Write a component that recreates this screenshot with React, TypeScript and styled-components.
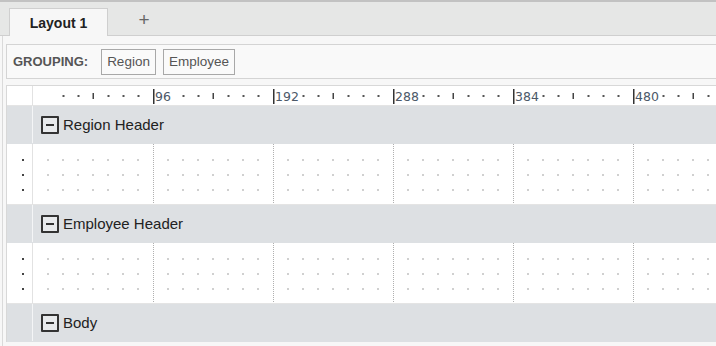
import React from 'react';
import styled, { createGlobalStyle } from 'styled-components';

const GlobalStyle = createGlobalStyle`
  html, body {
    margin: 0;
    padding: 0;
    background: #f7f7f7;
    font-family: "Liberation Sans", Arial, sans-serif;
    overflow: hidden;
  }
`;

const UNIT = 15;
const AREA_WIDTH = 700;

const Page = styled.div`
  width: 716px;
  height: 346px;
  display: flex;
  flex-direction: column;
  border-top: 2px solid #c2c2c2;
  box-sizing: border-box;
`;

const TabBar = styled.div`
  height: 33px;
  background: #e6e7e6;
  border-bottom: 1px solid #cfcfcf;
  display: flex;
  align-items: flex-end;
  padding-left: 9px;
  flex-shrink: 0;
`;

const Tab = styled.div<{ active?: boolean }>`
  width: 99px;
  height: 28px;
  margin-bottom: -1px;
  box-sizing: border-box;
  display: flex;
  align-items: center;
  justify-content: center;
  font-size: 14px;
  font-weight: bold;
  color: #222;
  background: ${({ active }) => (active ? '#f7f7f7' : 'transparent')};
  border: 1px solid ${({ active }) => (active ? '#cfcfcf' : 'transparent')};
  border-bottom: none;
`;

const AddTab = styled.div`
  width: 72px;
  height: 28px;
  display: flex;
  align-items: center;
  justify-content: center;
  font-size: 19px;
  font-weight: 300;
  color: #666;
  padding-bottom: 2px;
  box-sizing: border-box;
`;

const Content = styled.div`
  flex: 1;
  margin-left: 2px;
  border-left: 1px solid #dadada;
  padding: 8px 0 0 3px;
  display: flex;
  flex-direction: column;
  gap: 6px;
  overflow: hidden;
`;

const GroupingBar = styled.div`
  height: 35px;
  box-sizing: border-box;
  background: #f9f9f9;
  border: 1px solid #d4d4d4;
  border-right: none;
  display: flex;
  align-items: center;
  gap: 7px;
  padding-left: 6px;
`;

const GroupingLabel = styled.span`
  font-size: 13px;
  font-weight: bold;
  color: #555;
  margin-right: 6px;
`;

const GroupChip = styled.span`
  height: 26px;
  box-sizing: border-box;
  padding: 0 5px;
  display: flex;
  align-items: center;
  border: 1px solid #a8a8a8;
  background: #fafafa;
  font-size: 13.5px;
  color: #555;
`;

const Designer = styled.div`
  border: 1px solid #d8d8d8;
  border-right: none;
  border-bottom: none;
  background: #fff;
  display: flex;
  flex-direction: column;
`;

type RowKind = 'ruler' | 'header' | 'detail';

const rowHeight: Record<RowKind, number> = { ruler: 20, header: 38, detail: 61 };

const Row = styled.div<{ kind: RowKind }>`
  display: grid;
  grid-template-columns: 26px 1fr;
  box-sizing: border-box;
  height: ${({ kind }) => rowHeight[kind]}px;
  flex-shrink: 0;
  border-bottom: 1px solid ${({ kind }) => (kind === 'header' ? '#dde0e3' : '#e4e4e4')};
  background: ${({ kind }) => (kind === 'header' ? '#dde0e3' : '#fff')};
`;

const Gutter = styled.div<{ kind: RowKind }>`
  border-right: 1px solid ${({ kind }) => (kind === 'header' ? '#f4f5f6' : '#e2e2e2')};
  overflow: hidden;
`;

const Canvas = styled.div`
  overflow: hidden;
`;

const HeaderCell = styled.div`
  display: flex;
  align-items: center;
  gap: 4px;
  padding-left: 8px;
  font-size: 15px;
  color: #222;
`;

const Collapse = styled.span`
  width: 18px;
  height: 18px;
  box-sizing: border-box;
  border: 2px solid #333;
  border-radius: 1px;
  background: #e8eaec;
  display: flex;
  align-items: center;
  justify-content: center;

  &::after {
    content: '';
    width: 8px;
    height: 2px;
    background: #333;
  }
`;

const Ruler = () => {
  const marks = [];
  for (let k = 1; k * UNIT < AREA_WIDTH; k++) {
    const x = k * UNIT;
    if (k % 8 === 0) {
      marks.push(<rect key={k} x={x} y={3} width={1.5} height={15} fill="#333" />);
      marks.push(
        <text key={`t${k}`} x={x + 2} y={15} fontFamily="DejaVu Sans, sans-serif" fontSize={12.5} fill="#4b5868">
          {(k / 8) * 96}
        </text>
      );
    } else if (k % 8 === 1) {
      continue;
    } else if (k % 4 === 0) {
      marks.push(<rect key={k} x={x - 0.5} y={7} width={1.5} height={6} fill="#444" />);
    } else {
      marks.push(<rect key={k} x={x - 0.5} y={9} width={2} height={2} fill="#555" />);
    }
  }
  return (
    <svg width={AREA_WIDTH} height={19} style={{ display: 'block' }}>
      {marks}
    </svg>
  );
};

const DetailGrid = () => {
  const items = [];
  for (let k = 1; k * UNIT < AREA_WIDTH; k++) {
    const x = k * UNIT;
    if (k % 8 === 0) {
      items.push(
        <line key={k} x1={x + 0.5} y1={0} x2={x + 0.5} y2={60} stroke="#b0b0b0" strokeDasharray="1 1" />
      );
    } else {
      [15, 30, 45].forEach((y) =>
        items.push(<rect key={`${k}-${y}`} x={x - 1} y={y} width={2} height={2} fill="#d0d0d0" />)
      );
    }
  }
  return (
    <svg width={AREA_WIDTH} height={60} style={{ display: 'block' }}>
      {items}
    </svg>
  );
};

const GutterDots = () => (
  <svg width={26} height={60} style={{ display: 'block' }}>
    {[15, 30, 45].map((y) => (
      <rect key={y} x={15} y={y} width={2} height={2} fill="#444" />
    ))}
  </svg>
);

const Section = ({ title, withDetail }: { title: string; withDetail: boolean }) => (
  <>
    <Row kind="header">
      <Gutter kind="header" />
      <HeaderCell>
        <Collapse />
        {title}
      </HeaderCell>
    </Row>
    {withDetail && (
      <Row kind="detail">
        <Gutter kind="detail">
          <GutterDots />
        </Gutter>
        <Canvas>
          <DetailGrid />
        </Canvas>
      </Row>
    )}
  </>
);

export default function App() {
  return (
    <>
      <GlobalStyle />
      <Page>
        <TabBar>
          <Tab active>Layout 1</Tab>
          <AddTab>+</AddTab>
        </TabBar>
        <Content>
          <GroupingBar>
            <GroupingLabel>GROUPING:</GroupingLabel>
            <GroupChip>Region</GroupChip>
            <GroupChip>Employee</GroupChip>
          </GroupingBar>
          <Designer>
            <Row kind="ruler">
              <Gutter kind="ruler" />
              <Canvas>
                <Ruler />
              </Canvas>
            </Row>
            <Section title="Region Header" withDetail />
            <Section title="Employee Header" withDetail />
            <Section title="Body" withDetail={false} />
          </Designer>
        </Content>
      </Page>
    </>
  );
}
